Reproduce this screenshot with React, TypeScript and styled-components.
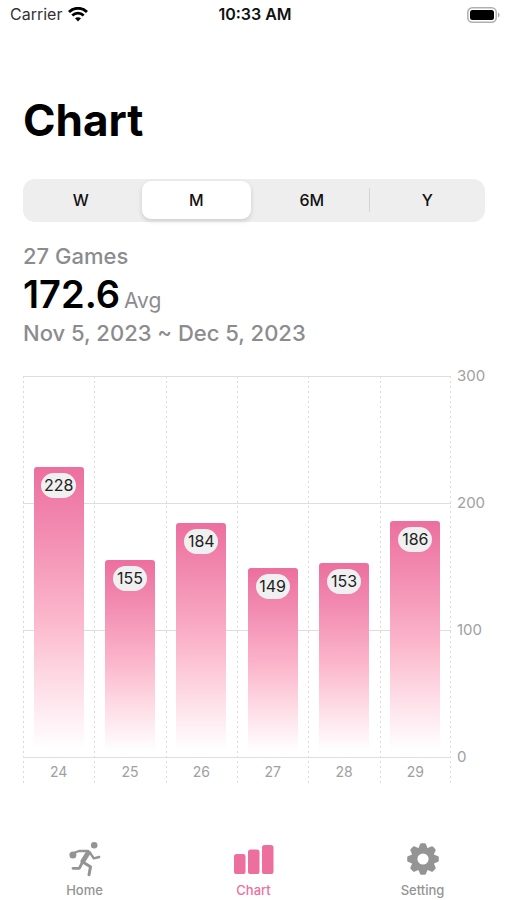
import React, { useState } from "react";
import styled, { createGlobalStyle, css } from "styled-components";

const GlobalStyle = createGlobalStyle`
  *, *::before, *::after { box-sizing: border-box; }
  body {
    margin: 0;
    background: #fff;
    color: #000;
    font-family: Inter, "Liberation Sans", sans-serif;
  }
  button { font: inherit; border: 0; background: none; padding: 0; cursor: pointer; }
  h1, p { margin: 0; }
`;

const Screen = styled.div`
  min-height: 100vh;
  display: flex;
  flex-direction: column;
`;

const StatusBar = styled.header`
  display: grid;
  grid-template-columns: 1fr auto 1fr;
  align-items: center;
  height: 29px;
  padding: 0 7px 0 10px;
  font-size: 16px;
  line-height: 19px;
`;

const Carrier = styled.span`
  display: flex;
  align-items: center;
  gap: 6px;
  color: #333;
`;

const Clock = styled.time`
  font-weight: 600;
  color: #111;
`;

const BatterySlot = styled.span`
  display: flex;
  justify-content: flex-end;
`;

const Main = styled.main`
  flex: 1;
  padding: 65px 22px 0 23px;
`;

const Title = styled.h1`
  font-size: 44px;
  line-height: 52px;
  font-weight: 700;
`;

const Segments = styled.div`
  display: flex;
  height: 43px;
  margin-top: 33px;
  padding: 2px 0 3px;
  border-radius: 12px;
  background: #eee;
`;

const Segment = styled.button<{ $active: boolean; $divided: boolean }>`
  flex: 1;
  display: flex;
  margin: 0;
  padding: 0 3px;
  font-size: 16px;
  font-weight: 500;
  color: #111;
  ${(p) =>
    p.$divided &&
    css`
      background: linear-gradient(#d4d4d4, #d4d4d4) right center / 1px 24px no-repeat;
    `}
  span {
    flex: 1;
    display: flex;
    align-items: center;
    justify-content: center;
    align-self: stretch;
    border-radius: 9px;
    ${(p) =>
      p.$active &&
      css`
        background: #fff;
        box-shadow: 0 2px 5px rgba(0, 0, 0, 0.14);
      `}
  }
`;

const Summary = styled.section`
  margin-top: 19px;
`;

const Caption = styled.p`
  font-size: 22px;
  line-height: 30px;
  font-weight: 500;
  color: #8c8c8e;
`;

const Average = styled.p`
  display: flex;
  align-items: baseline;
  gap: 4px;
  font-size: 38px;
  line-height: 47px;
  font-weight: 600;
  small {
    font-size: 21px;
    font-weight: 400;
    line-height: 30px;
    color: #8c8c8e;
  }
`;

const ChartFrame = styled.figure`
  display: grid;
  grid-template-columns: 1fr 34px;
  margin: 28px 0 0;
  color: #a0a0a2;
  font-size: 15px;
  line-height: 20px;
`;

const Plot = styled.div`
  position: relative;
  display: grid;
  grid-template-columns: repeat(6, 1fr);
`;

const GridLines = styled.div`
  position: absolute;
  inset: 0 0 25px;
  display: flex;
  flex-direction: column;
  justify-content: space-between;
  pointer-events: none;
`;

const GridLine = styled.i`
  height: 1px;
  background: #dedede;
`;

const dotted = "repeating-linear-gradient(#dadada 0 2px, transparent 2px 5px)";

const Day = styled.div`
  display: flex;
  flex-direction: column;
  background: ${dotted} left top / 1px 100% no-repeat;
  &:last-child {
    background: ${dotted} left top / 1px 100% no-repeat,
      ${dotted} right top / 1px 100% no-repeat;
  }
`;

const Track = styled.div`
  position: relative;
  height: 382px;
  display: flex;
  align-items: flex-end;
  justify-content: center;
  border-bottom: 1px solid #dedede;
`;

const Bar = styled.div`
  width: 70%;
  display: flex;
  justify-content: center;
  align-items: flex-start;
  padding-top: 6px;
  border-radius: 3px 3px 0 0;
  background: linear-gradient(#ec6f9e 0%, #f28bb0 22%, #fbb3ca 50%, #fedde7 75%, #fff 97%);
`;

const Value = styled.span`
  min-width: 34px;
  height: 25px;
  padding: 0 3px;
  border-radius: 13px;
  background: #f0f0f0;
  color: #222;
  font-size: 16px;
  line-height: 25px;
  text-align: center;
`;

const DayLabel = styled.span`
  height: 25px;
  padding-top: 4px;
  text-align: center;
  font-size: 14px;
`;

const Axis = styled.div`
  display: flex;
  flex-direction: column;
  justify-content: space-between;
  margin: -10px 0 16px;
  padding-left: 6px;
`;

const TabBar = styled.nav`
  display: grid;
  grid-template-columns: repeat(3, 1fr);
  height: 63px;
`;

const Tab = styled.a<{ $active?: boolean }>`
  display: flex;
  flex-direction: column;
  align-items: center;
  gap: 2px;
  text-decoration: none;
  font-size: 13px;
  line-height: 18px;
  font-weight: 500;
  color: ${(p) => (p.$active ? "#ec6f9e" : "#949494")};
`;

const WifiIcon = () => (
  <svg width="20" height="15" viewBox="0 0 20 15" fill="none" stroke="#000" strokeWidth="2.8" aria-hidden="true">
    <path d="M1 5C6 0 14 0 19 5" />
    <path d="M4.3 8.5c3.2-3.1 8.2-3.1 11.4 0" />
    <path d="M10 14.4l-3-3.1c1.7-1.5 4.3-1.5 6 0z" fill="#000" stroke="none" />
  </svg>
);

const BatteryIcon = () => (
  <svg width="34" height="16" viewBox="0 0 34 16" aria-hidden="true">
    <rect x="1.8" y="0.8" width="28.4" height="14.4" rx="4.5" fill="#fff" stroke="#b0b0b0" strokeWidth="1.5" />
    <rect x="4" y="3" width="24" height="10" rx="2.5" fill="#000" />
    <path d="M32 5.5c2 .8 2 4.2 0 5z" fill="#a8a8a8" />
  </svg>
);

const RunnerIcon = () => (
  <svg width="40" height="42" viewBox="0 0 40 42" aria-hidden="true" fill="none" stroke="currentColor" strokeLinecap="round" strokeLinejoin="round">
    <circle cx="29.2" cy="8.2" r="3.3" fill="currentColor" stroke="none" />
    <circle cx="7.9" cy="18" r="3.5" fill="currentColor" stroke="none" />
    <path d="M8 16.3l6-2.3h9" strokeWidth="2.4" />
    <path d="M23 16l-5 8" strokeWidth="5" />
    <path d="M24.5 15l4.3 6.4 5.4-1.4" strokeWidth="2.4" />
    <path d="M18.5 25.5l7 4.2-1.5 8.1" strokeWidth="3" />
    <path d="M17 26l-2.7 5.3H8" strokeWidth="2.8" />
  </svg>
);

const BarsIcon = () => (
  <svg width="40" height="42" viewBox="0 0 40 42" fill="currentColor" aria-hidden="true">
    <rect x="0" y="17" width="11.5" height="20" rx="2.6" />
    <rect x="14" y="12.5" width="11.5" height="24.5" rx="2.6" />
    <rect x="28" y="8" width="11.5" height="29" rx="2.6" />
  </svg>
);

const teeth = [0, 45, 90, 135, 180, 225, 270, 315];

const GearIcon = () => (
  <svg width="40" height="42" viewBox="0 0 40 42" fill="currentColor" aria-hidden="true">
    {teeth.map((angle) => (
      <path
        key={angle}
        transform={`rotate(${angle} 20 22)`}
        d="M15.2 12l1.7-4.6q.4-1.2 1.6-1.2h3q1.2 0 1.6 1.2l1.7 4.6z"
      />
    ))}
    <path
      fillRule="evenodd"
      d="M20 10a12 12 0 1 1 0 24a12 12 0 1 1 0-24zM20 16.4a5.6 5.6 0 1 0 0 11.2a5.6 5.6 0 1 0 0-11.2z"
    />
  </svg>
);

const ranges = ["W", "M", "6M", "Y"];
const maxScore = 300;
const ticks = [300, 200, 100, 0];
const days = [
  { day: 24, score: 228 },
  { day: 25, score: 155 },
  { day: 26, score: 184 },
  { day: 27, score: 149 },
  { day: 28, score: 153 },
  { day: 29, score: 186 },
];

export default function App() {
  const [range, setRange] = useState("M");
  const selected = ranges.indexOf(range);

  return (
    <Screen>
      <GlobalStyle />
      <StatusBar>
        <Carrier>
          Carrier <WifiIcon />
        </Carrier>
        <Clock>10:33 AM</Clock>
        <BatterySlot>
          <BatteryIcon />
        </BatterySlot>
      </StatusBar>

      <Main>
        <Title>Chart</Title>

        <Segments role="group" aria-label="Range">
          {ranges.map((name, i) => (
            <Segment
              key={name}
              type="button"
              aria-pressed={name === range}
              $active={name === range}
              $divided={i < ranges.length - 1 && i !== selected && i + 1 !== selected}
              onClick={() => setRange(name)}
            >
              <span>{name}</span>
            </Segment>
          ))}
        </Segments>

        <Summary>
          <Caption>27 Games</Caption>
          <Average>
            172.6 <small>Avg</small>
          </Average>
          <Caption>Nov 5, 2023 ~ Dec 5, 2023</Caption>
        </Summary>

        <ChartFrame aria-label="Average score by day">
          <Plot>
            <GridLines>
              {ticks.map((tick) => (
                <GridLine key={tick} />
              ))}
            </GridLines>
            {days.map(({ day, score }) => (
              <Day key={day}>
                <Track>
                  <Bar style={{ height: `${(score / maxScore) * 100}%` }}>
                    <Value>{score}</Value>
                  </Bar>
                </Track>
                <DayLabel>{day}</DayLabel>
              </Day>
            ))}
          </Plot>
          <Axis>
            {ticks.map((tick) => (
              <span key={tick}>{tick}</span>
            ))}
          </Axis>
        </ChartFrame>
      </Main>

      <TabBar aria-label="Main">
        <Tab href="#home">
          <RunnerIcon />
          Home
        </Tab>
        <Tab href="#chart" $active aria-current="page">
          <BarsIcon />
          Chart
        </Tab>
        <Tab href="#setting">
          <GearIcon />
          Setting
        </Tab>
      </TabBar>
    </Screen>
  );
}
